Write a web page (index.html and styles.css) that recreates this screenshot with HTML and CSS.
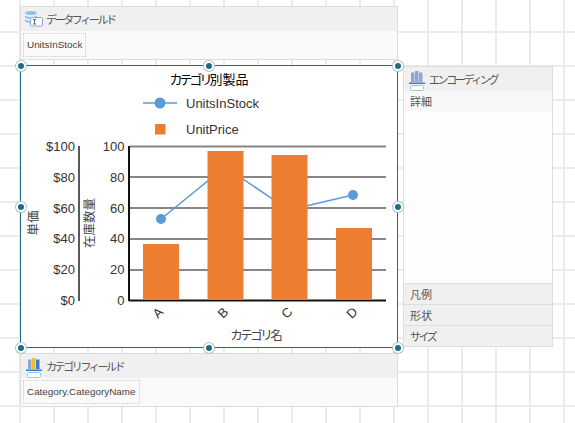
FILE: index.html
```html
<!DOCTYPE html>
<html lang="ja">
<head>
    <meta charset="UTF-8">
    <title>チャートデザイナー</title>
    <link rel="stylesheet" href="styles.css">
</head>
<body>
    <div class="designer">
        <div class="left-col">
            <div class="panel field-panel">
                <div class="panel-head">
                    <svg class="icon" viewBox="0 0 18 16">
                        <ellipse cx="6" cy="2" rx="6" ry="2" fill="#8fc0f2"/>
                        <path d="M0 4.500q6 3 12 0v2q-6 3-12 0zM0 8.500q6 3 12 0v2q-6 3-12 0z" fill="#8fc0f2"/>
                        <rect x="5.500" y="6.500" width="12" height="8.500" rx="1" fill="#fff" stroke="#8aa6d8"/>
                        <path d="M8 8.500h3M9.500 8.500v4.500M8 13h3" stroke="#666" fill="none"/>
                    </svg>
                    <span class="kana">データフィールド</span>
                </div>
                <div class="panel-body">
                    <div class="chip">UnitsInStock</div>
                </div>
            </div>

            <div class="chart">
                <svg class="chart-svg" viewBox="21 66 376 281">
                    <text class="title" x="209" y="84" text-anchor="middle"><tspan class="title-kana">カテゴリ</tspan>別製品</text>

                    <line x1="143" y1="103" x2="177" y2="103" class="series-line"/>
                    <circle cx="160" cy="103" r="5.500" fill="#5b9bd5"/>
                    <text class="lbl" x="186" y="108">UnitsInStock</text>
                    <rect x="155" y="124" width="10.500" height="10.500" fill="#ed7d31"/>
                    <text class="lbl" x="186" y="133.500">UnitPrice</text>

                    <g class="grid-lines">
                        <line x1="130" y1="146.500" x2="386" y2="146.500"/>
                        <line x1="130" y1="177" x2="386" y2="177"/>
                        <line x1="130" y1="208" x2="386" y2="208"/>
                        <line x1="130" y1="239" x2="386" y2="239"/>
                        <line x1="130" y1="270" x2="386" y2="270"/>
                    </g>
                    <line x1="129" y1="146" x2="129" y2="301" class="axis"/>
                    <line x1="129" y1="300.500" x2="386" y2="300.500" class="axis"/>
                    <line x1="79" y1="146" x2="79" y2="301" class="axis2"/>

                    <polyline points="161,219 225,167 289,210 353,195" class="series-line" fill="none"/>
                    <circle cx="161" cy="219" r="5" fill="#5b9bd5"/>
                    <circle cx="225" cy="167" r="5" fill="#5b9bd5"/>
                    <circle cx="289" cy="210" r="5" fill="#5b9bd5"/>
                    <circle cx="353" cy="195" r="5" fill="#5b9bd5"/>

                    <g class="bars">
                        <rect x="143" y="244" width="36" height="56"/>
                        <rect x="207.500" y="151" width="36" height="149"/>
                        <rect x="271.500" y="155" width="36" height="145"/>
                        <rect x="336" y="228" width="36" height="72"/>
                    </g>

                    <g class="lbl" text-anchor="end">
                        <text x="75" y="151">$100</text>
                        <text x="75" y="182">$80</text>
                        <text x="75" y="213">$60</text>
                        <text x="75" y="243">$40</text>
                        <text x="75" y="274">$20</text>
                        <text x="75" y="305">$0</text>
                        <text x="124.500" y="151">100</text>
                        <text x="124.500" y="182">80</text>
                        <text x="124.500" y="213">60</text>
                        <text x="124.500" y="243">40</text>
                        <text x="124.500" y="274">20</text>
                        <text x="124.500" y="305">0</text>
                    </g>

                    <g class="lbl" text-anchor="middle">
                        <text transform="translate(161 316) rotate(-45)">A</text>
                        <text transform="translate(226 316) rotate(-45)">B</text>
                        <text transform="translate(290 316) rotate(-45)">C</text>
                        <text transform="translate(355 316) rotate(-45)">D</text>
                    </g>

                    <text class="axis-title" text-anchor="middle" transform="translate(38 223) rotate(-90)">単価</text>
                    <text class="axis-title" text-anchor="middle" transform="translate(94 223) rotate(-90)">在庫数量</text>
                    <text class="axis-title" x="256.500" y="340" text-anchor="middle"><tspan class="axis-kana">カテゴリ</tspan>名</text>
                </svg>

                <span class="handle tl"></span>
                <span class="handle tc"></span>
                <span class="handle tr"></span>
                <span class="handle ml"></span>
                <span class="handle mr"></span>
                <span class="handle bl"></span>
                <span class="handle bc"></span>
                <span class="handle br"></span>
            </div>

            <div class="panel field-panel">
                <div class="panel-head">
                    <svg class="icon" viewBox="0 0 18 16">
                        <rect x="3" y="1.500" width="3.500" height="9.500" fill="#8fa6d0"/>
                        <rect x="7" y="0" width="3.500" height="11" fill="#f5b82e"/>
                        <rect x="11" y="1.500" width="3.500" height="9.500" fill="#2f80d0"/>
                        <rect x="1" y="11.500" width="16" height="1.500" fill="#2f80d0"/>
                        <rect x="2.500" y="14.500" width="13" height="5" rx="1" fill="#fff" stroke="#9cc4f0"/>
                    </svg>
                    <span class="kana">カテゴリフィールド</span>
                </div>
                <div class="panel-body">
                    <div class="chip">Category.CategoryName</div>
                </div>
            </div>
        </div>

        <div class="panel encoding">
            <div class="panel-head">
                <svg class="icon" viewBox="0 0 18 16">
                    <rect x="3" y="1.500" width="3.500" height="9.500" fill="#8fa6d0"/>
                    <rect x="7" y="0" width="3.500" height="11" fill="#8fa6d0"/>
                    <rect x="11" y="1.500" width="3.500" height="9.500" fill="#8fa6d0"/>
                    <rect x="1" y="11.500" width="16" height="1.500" fill="#2f80d0"/>
                    <rect x="2.500" y="14.500" width="13" height="5" rx="1" fill="#fff" stroke="#9cc4f0"/>
                </svg>
                <span class="kana">エンコーディング</span>
            </div>
            <div class="enc-detail">詳細</div>
            <div class="enc-space"></div>
            <div class="enc-row">凡例</div>
            <div class="enc-row">形状</div>
            <div class="enc-row"><span class="kana">サイズ</span></div>
        </div>
    </div>
</body>
</html>
```

FILE: styles.css
```css
body {
    margin: 0;
    height: 423px;
    overflow: hidden;
    font-family: "Noto Sans CJK JP", "Liberation Sans", sans-serif;
    background-color: #fff;
    background-image:
        linear-gradient(to right, #ebebeb 2px, transparent 2px),
        linear-gradient(to bottom, #ebebeb 2px, transparent 2px);
    background-size: 34px 34px;
    background-position: 19px 31px;
}

.designer {
    display: flex;
    align-items: flex-start;
    gap: 5px;
    padding: 6px 0 0 20px;
}

.left-col {
    display: flex;
    flex-direction: column;
    gap: 5px;
    width: 378px;
}

.panel {
    box-sizing: border-box;
    border: 1px solid #ddd;
    background-color: #fafafa;
    color: #555;
}

.field-panel {
    height: 54px;
}

.panel-head {
    display: flex;
    align-items: center;
    gap: 3px;
    height: 24px;
    padding-left: 4px;
    background-color: #f0f0f0;
    font-size: 11px;
}

.icon {
    width: 18px;
    height: 16px;
    overflow: visible;
}

.kana {
    letter-spacing: -2.400px;
    font-size: 11px;
}

.panel-body {
    padding: 2px;
}

.chip {
    box-sizing: border-box;
    width: fit-content;
    height: 24px;
    line-height: 22px;
    padding: 0 3px;
    border: 1px dotted #ccc;
    font-family: "Liberation Sans", sans-serif;
    font-size: 9.900px;
    color: #444;
}

.chart {
    position: relative;
    box-sizing: border-box;
    height: 283px;
    border: 1px solid #1f6a85;
    background-color: #fff;
}

.chart-svg {
    display: block;
    width: 376px;
    height: 281px;
    font-family: "Liberation Sans", "Noto Sans CJK JP", sans-serif;
}

.title {
    font-family: "Noto Sans CJK JP", sans-serif;
    font-size: 13px;
    fill: #000;
}

.title-kana {
    letter-spacing: -3px;
}

.axis-kana {
    letter-spacing: -2.500px;
}

.lbl {
    font-size: 13px;
    fill: #333;
}

.axis-title {
    font-family: "Noto Sans CJK JP", sans-serif;
    font-size: 12.500px;
    fill: #444;
}

.series-line {
    stroke: #5b9bd5;
    stroke-width: 1.500;
}

.grid-lines line {
    stroke: #868686;
    stroke-width: 2;
}

.axis {
    stroke: #111;
    stroke-width: 2;
}

.axis2 {
    stroke: #595959;
    stroke-width: 2;
}

.bars rect {
    fill: #ed7d31;
}

.handle {
    position: absolute;
    box-sizing: border-box;
    width: 10px;
    height: 10px;
    border-radius: 50%;
    background-color: #1f6a85;
    border: 2px solid #fff;
    box-shadow: 0 0 0 1px #a9c4cf;
    transform: translate(-50%, -50%);
}

.tl { left: -0.500px; top: -0.500px; }
.tc { left: 50%; top: -0.500px; }
.tr { left: calc(100% + 0.500px); top: -0.500px; }
.ml { left: -0.500px; top: 50%; }
.mr { left: calc(100% + 0.500px); top: 50%; }
.bl { left: -0.500px; top: calc(100% + 0.500px); }
.bc { left: 50%; top: calc(100% + 0.500px); }
.br { left: calc(100% + 0.500px); top: calc(100% + 0.500px); }

.encoding {
    width: 150px;
    height: 281px;
    margin-top: 60px;
    display: flex;
    flex-direction: column;
    background-color: #fdfdfd;
}

.enc-detail {
    height: 20px;
    line-height: 20px;
    padding-left: 6px;
    background-color: #f8f8f8;
    font-size: 11px;
}

.enc-space {
    flex: 1;
}

.enc-row {
    height: 20px;
    line-height: 20px;
    padding-left: 6px;
    border-top: 1px solid #ddd;
    background-color: #f0f0f0;
    font-size: 11px;
    color: #555;
}
```
